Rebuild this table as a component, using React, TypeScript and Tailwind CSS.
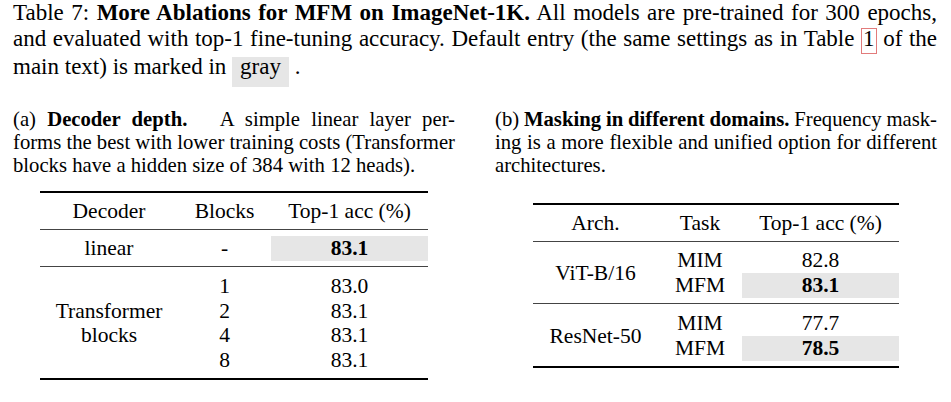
const cols1 = "grid grid-cols-[138px_93px_157px] text-center";
const cols2 = "grid grid-cols-[125px_84px_157px] text-center";

function JLine({ children }: { children: React.ReactNode }) {
  return (
    <div className="whitespace-nowrap text-justify [text-align-last:justify] [word-spacing:-3px]">
      {children}
    </div>
  );
}

function DecoderTable() {
  const rows = [
    ["1", "83.0"],
    ["2", "83.1"],
    ["4", "83.1"],
    ["8", "83.1"],
  ];
  return (
    <div className="w-[388px] text-[21.5px]">
      <div className="h-[2px] bg-black" />
      <div className={`${cols1} h-[36px] items-center`}>
        <div>Decoder</div>
        <div>Blocks</div>
        <div>Top-1 acc (%)</div>
      </div>
      <div className="h-px bg-[#444]" />
      <div className={`${cols1} pt-[6px] pb-[5px] leading-[25px]`}>
        <div>linear</div>
        <div>-</div>
        <div className="bg-[#e6e6e6] font-bold">83.1</div>
      </div>
      <div className="h-px bg-[#444]" />
      <div className={`${cols1} pt-[7px] pb-[6px] leading-[24.5px]`}>
        <div className="flex flex-col justify-center leading-[24px]">
          <span>Transformer</span>
          <span>blocks</span>
        </div>
        <div>
          {rows.map((r) => (
            <div key={r[0]}>{r[0]}</div>
          ))}
        </div>
        <div>
          {rows.map((r, i) => (
            <div key={i}>{r[1]}</div>
          ))}
        </div>
      </div>
      <div className="h-[2px] bg-black" />
    </div>
  );
}

function DomainTable() {
  const groups = [
    { arch: "ViT-B/16", mim: "82.8", mfm: "83.1" },
    { arch: "ResNet-50", mim: "77.7", mfm: "78.5" },
  ];
  return (
    <div className="w-[366px] text-[21.5px]">
      <div className="h-[2px] bg-black" />
      <div className={`${cols2} h-[36px] items-center`}>
        <div>Arch.</div>
        <div>Task</div>
        <div>Top-1 acc (%)</div>
      </div>
      {groups.map((g, i) => (
        <div key={g.arch}>
          <div className="h-px bg-[#444]" />
          <div className={`${cols2} ${i === 0 ? "pt-[6px]" : "pt-[7px]"} pb-[5px] leading-[25px]`}>
            <div className="flex items-center justify-center">{g.arch}</div>
            <div>
              <div>MIM</div>
              <div>MFM</div>
            </div>
            <div>
              <div>{g.mim}</div>
              <div className="bg-[#e6e6e6] font-bold">{g.mfm}</div>
            </div>
          </div>
        </div>
      ))}
      <div className="h-[2px] bg-black" />
    </div>
  );
}

export default function App() {
  return (
    <div className="w-[951px] h-[402px] overflow-hidden bg-white text-black font-['Liberation_Serif','Times_New_Roman',serif]">
      <div className="h-[86px] px-[13px] pr-[14px] text-[23px] leading-[26px]">
        <JLine>
          Table 7: <b>More Ablations for MFM on ImageNet-1K.</b> All models are pre-trained for 300 epochs,
        </JLine>
        <JLine>
          and evaluated with top-1 fine-tuning accuracy. Default entry (the same settings as in Table{" "}
          <span className="inline-block border border-[#e27b7b] px-px pb-[4px] leading-[20px]">1</span> of the
        </JLine>
        <div>
          main text) is marked in{" "}
          <span className="inline-block bg-[#e6e6e6] px-[8px] pb-[10px] leading-[20px]">gray</span> .
        </div>
      </div>

      <div className="mt-[22px] grid grid-cols-[442px_442px] gap-x-[40px] px-[13px] text-[20.7px] leading-[23px]">
        <div>
          <JLine>
            (a) <b>Decoder depth.</b>&nbsp;&nbsp; A simple linear layer per-
          </JLine>
          <JLine>forms the best with lower training costs (Transformer</JLine>
          <div>blocks have a hidden size of 384 with 12 heads).</div>
        </div>
        <div>
          <JLine>
            (b) <b>Masking in different domains.</b> Frequency mask-
          </JLine>
          <JLine>ing is a more flexible and unified option for different</JLine>
          <div>architectures.</div>
        </div>
      </div>

      <div className="mt-[14px] grid grid-cols-[442px_442px] gap-x-[40px] px-[13px] items-center">
        <div className="flex justify-center">
          <DecoderTable />
        </div>
        <div className="flex justify-center">
          <DomainTable />
        </div>
      </div>
    </div>
  );
}
